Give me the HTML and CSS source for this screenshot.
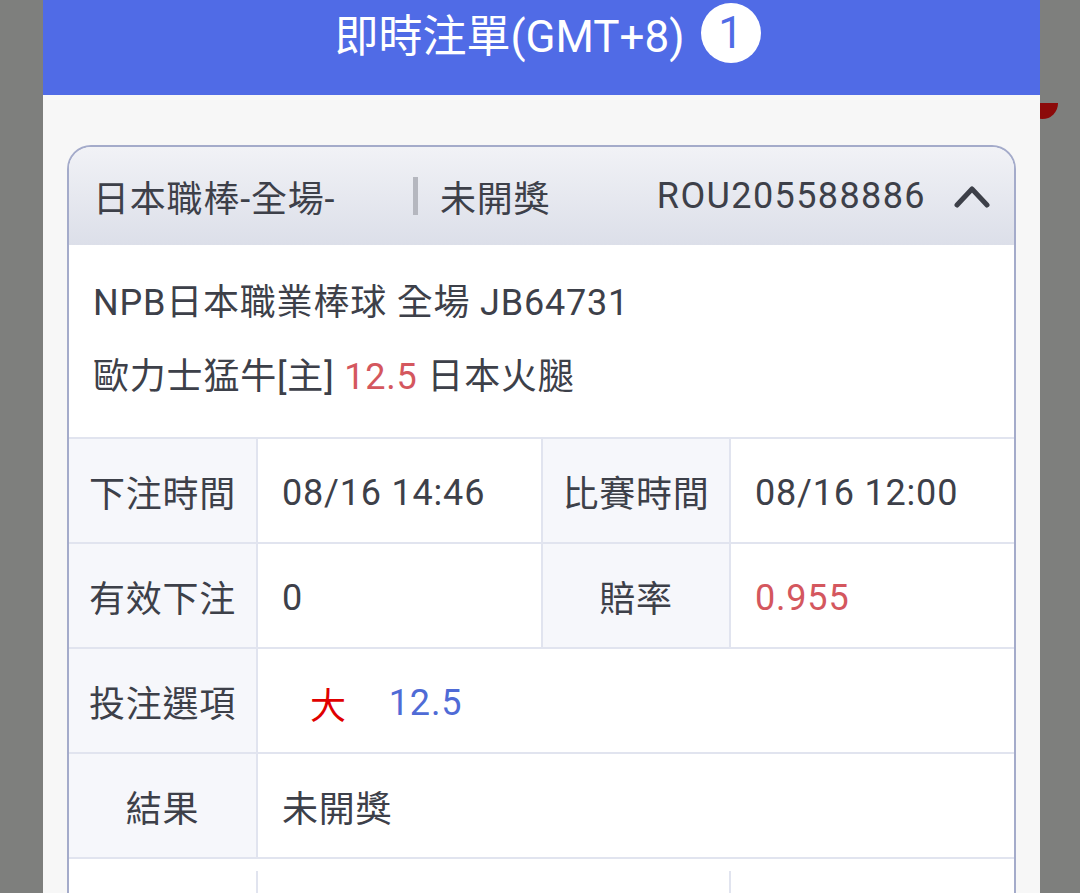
FILE: index.html
```html
<!DOCTYPE html>
<html lang="zh-Hant">
  <head>
    <meta charset="UTF-8" />
    <meta name="viewport" content="width=device-width, initial-scale=1.0" />
    <title>即時注單</title>
    <link rel="stylesheet" href="styles.css">
  </head>
  <body>
    <div class="page-dot"></div>
    <div class="modal">
      <div class="modal-head">
        <h2>即時注單(GMT+8)</h2>
        <span class="badge">1</span>
      </div>
      <div class="modal-body">
        <div class="card">
          <div class="card-head">
            <span class="league">日本職棒-全場-</span>
            <span class="divider"></span>
            <span class="status">未開獎</span>
            <span class="order-no">ROU205588886</span>
            <svg class="arrow" width="36" height="24" viewBox="0 0 36 24">
              <polyline points="3,21 18,5 33,21" fill="none" stroke="#3d4049" stroke-width="5" stroke-linecap="round" stroke-linejoin="round" />
            </svg>
          </div>
          <div class="match">
            <p>NPB日本職業棒球 全場 JB64731</p>
            <p>歐力士猛牛[主] <span class="red">12.5</span> 日本火腿</p>
          </div>
          <div class="table">
            <div class="row">
              <div class="label">下注時間</div>
              <div class="value num">08/16 14:46</div>
              <div class="label">比賽時間</div>
              <div class="value num">08/16 12:00</div>
            </div>
            <div class="row">
              <div class="label">有效下注</div>
              <div class="value num">0</div>
              <div class="label">賠率</div>
              <div class="value num red">0.955</div>
            </div>
            <div class="row">
              <div class="label">投注選項</div>
              <div class="value num"><span class="pick">大</span><span class="line">12.5</span></div>
            </div>
            <div class="row">
              <div class="label">結果</div>
              <div class="value">未開獎</div>
            </div>
            <div class="row row-blank">
              <div class="label"></div>
              <div class="value"></div>
              <div class="value"></div>
            </div>
          </div>
        </div>
      </div>
    </div>
  </body>
</html>
```

FILE: styles.css
```css
body {
  margin: 0;
  padding: 0;
  height: 893px;
  overflow: hidden;
  background-color: #7e7f7d;
  font-family: Roboto, "Noto Sans CJK TC", sans-serif;
  color: #3d4049;
  position: relative;
}
.page-dot {
  position: absolute;
  left: 1030px;
  top: 103px;
  width: 28px;
  height: 16px;
  border-radius: 0 0 18px 14px;
  background-color: #8c0a0a;
}
.modal {
  position: relative;
  margin-left: 43px;
  width: 997px;
  min-height: 893px;
  background-color: #f7f7f7;
}
.modal-head {
  height: 95px;
  box-sizing: border-box;
  padding-bottom: 30px;
  background-color: #506be6;
  display: flex;
  justify-content: center;
  align-items: center;
  gap: 16px;
}
.modal-head h2 {
  margin: 0;
  color: #fff;
  font-size: 44px;
  font-weight: 400;
  padding-left: 12px;
}
.badge {
  width: 60px;
  height: 60px;
  border-radius: 50%;
  background-color: #fff;
  color: #506be6;
  font-size: 44px;
  display: flex;
  justify-content: center;
  align-items: center;
}
.modal-body {
  padding: 50px 24px 0;
}
.card {
  border: 2px solid #a4abca;
  border-bottom: none;
  border-radius: 24px 24px 0 0;
  background-color: #fff;
  overflow: hidden;
  letter-spacing: 0.8px;
}
.card-head {
  height: 98px;
  display: flex;
  align-items: center;
  padding: 0 24px 0 24px;
  font-size: 36px;
  background: linear-gradient(#f1f2f6, #dcdfe9);
}
.league {
  width: 320px;
}
.divider {
  width: 5px;
  height: 38px;
  background-color: #b5b7bf;
  margin-right: 22px;
}
.order-no {
  margin-left: auto;
  margin-right: 28px;
  letter-spacing: 1.4px;
}
.match {
  padding: 21px 24px 23px;
  font-size: 36px;
}
.match p {
  margin: 0;
  line-height: 74px;
}
.red {
  color: #d4575e;
}
.table {
  font-size: 36px;
}
.row {
  display: flex;
  height: 103px;
  border-top: 2px solid #e1e4ef;
}
.label {
  width: 187px;
  flex-shrink: 0;
  background-color: #f6f7fb;
  display: flex;
  justify-content: center;
  align-items: center;
}
.value {
  width: 287px;
  flex-shrink: 0;
  border-left: 2px solid #e1e4ef;
  border-right: 2px solid #e1e4ef;
  padding-left: 24px;
  box-sizing: border-box;
  display: flex;
  align-items: center;
}
.value.num {
  padding-top: 4px;
}
.value + .label {
  width: 186px;
}
.value:last-child {
  border-right: none;
  flex: 1;
}
.pick {
  color: #e00000;
  margin-left: 28px;
  margin-right: 42px;
}
.line {
  color: #4f6bd6;
}
.row-blank {
  padding-top: 12px;
}
.row-blank .label {
  background-color: #fff;
}
.row-blank .value:nth-child(2) {
  width: 473px;
  border-right: none;
}
```
